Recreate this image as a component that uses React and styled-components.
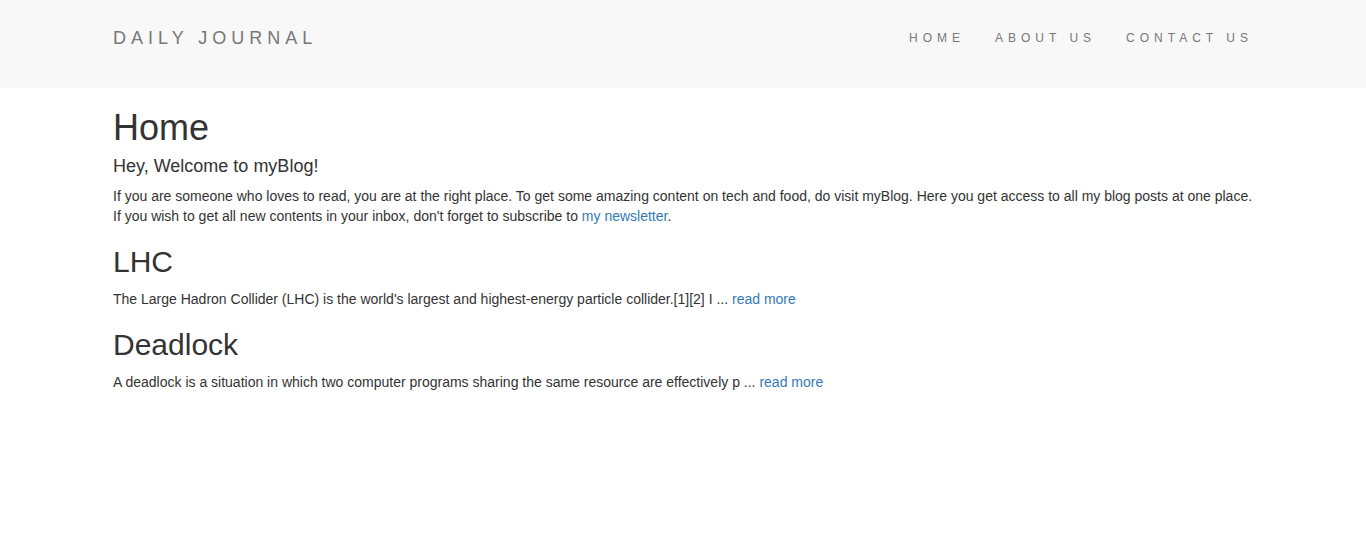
import React from "react";
import styled, { createGlobalStyle } from "styled-components";

const Global = createGlobalStyle`
  html, body { margin: 0; padding: 0; background: #fff; }
  body {
    font-family: "Liberation Sans", Arial, sans-serif;
    font-size: 14px;
    line-height: 20px;
    color: #333;
  }
  * { box-sizing: border-box; }
`;

const Header = styled.header`
  background: #f8f8f8;
  height: 88px;
`;

const Container = styled.div`
  width: 1170px;
  margin: 0 auto;
  padding: 0 15px;
`;

const NavInner = styled(Container)`
  display: flex;
  justify-content: space-between;
  align-items: flex-start;
  padding-top: 28px;
`;

const Brand = styled.a`
  font-size: 18px;
  line-height: 20px;
  letter-spacing: 5px;
  color: #777;
  text-decoration: none;
`;

const NavList = styled.ul`
  display: flex;
  list-style: none;
  margin: 0 -15px 0 0;
  padding: 0;
`;

const NavLink = styled.a`
  display: block;
  padding: 0 15px;
  font-size: 12px;
  line-height: 20px;
  letter-spacing: 5px;
  color: #777;
  text-decoration: none;
`;

const Main = styled(Container)`
  padding-top: 20px;
`;

const Title = styled.h1`
  font-size: 36px;
  font-weight: 500;
  line-height: 1.1;
  margin: 0 0 9px;
`;

const Subtitle = styled.h4`
  font-size: 18px;
  font-weight: 500;
  line-height: 1.1;
  margin: 9px 0 10px;
`;

const PostTitle = styled.h2`
  font-size: 30px;
  font-weight: 500;
  line-height: 1.1;
  margin: 19px 0 11px;
`;

const Para = styled.p`
  margin: 0 0 10px;
`;

const Link = styled.a`
  color: #337ab7;
  text-decoration: none;
`;

const posts = [
  {
    title: "LHC",
    body: "The Large Hadron Collider (LHC) is the world's largest and highest-energy particle collider.[1][2] I",
  },
  {
    title: "Deadlock",
    body: "A deadlock is a situation in which two computer programs sharing the same resource are effectively p",
  },
];

export default function App() {
  return (
    <>
      <Global />
      <Header>
        <NavInner>
          <Brand href="#">DAILY JOURNAL</Brand>
          <NavList>
            <li><NavLink href="#">HOME</NavLink></li>
            <li><NavLink href="#">ABOUT US</NavLink></li>
            <li><NavLink href="#">CONTACT US</NavLink></li>
          </NavList>
        </NavInner>
      </Header>
      <Main>
        <Title>Home</Title>
        <Subtitle>Hey, Welcome to myBlog!</Subtitle>
        <Para>
          If you are someone who loves to read, you are at the right place. To get some amazing content on tech and food, do visit myBlog. Here you get access to all my blog posts at one place. If you wish to get all new contents in your inbox, don't forget to subscribe to <Link href="#">my newsletter</Link>.
        </Para>
        {posts.map((p) => (
          <section key={p.title}>
            <PostTitle>{p.title}</PostTitle>
            <Para>
              {p.body} ... <Link href="#">read more</Link>
            </Para>
          </section>
        ))}
      </Main>
    </>
  );
}
